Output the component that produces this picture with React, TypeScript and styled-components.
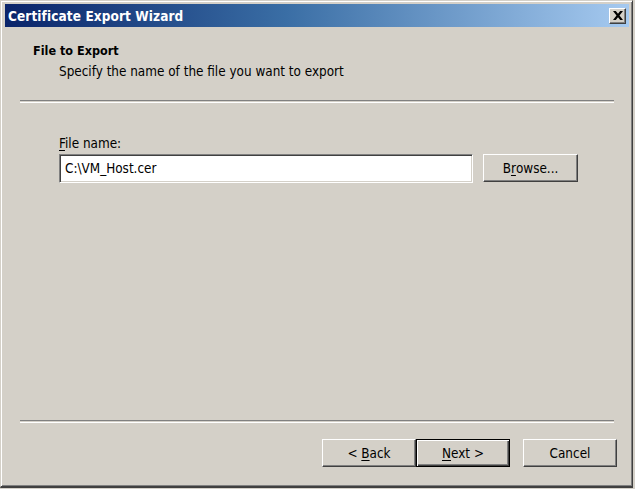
import React from "react";
import styled, { createGlobalStyle } from "styled-components";

const Global = createGlobalStyle`
  html, body { margin: 0; padding: 0; background: #d4d0c8; }
  body { font-family: "DejaVu Sans Condensed", "DejaVu Sans", Tahoma, sans-serif; }
`;

const Window = styled.div`
  box-sizing: border-box;
  width: 633px;
  height: 488px;
  background: #d4d0c8;
  border-top: 1px solid #d4d0c8;
  border-left: 1px solid #d4d0c8;
  border-right: 1px solid #404040;
  border-bottom: 2px solid #404040;
  box-shadow: inset 1px 1px 0 #ffffff, inset -1px -1px 0 #808080;
  padding: 3px 3px 3px 4px;
  display: flex;
  flex-direction: column;
`;

const TitleBar = styled.div`
  height: 23px;
  display: flex;
  align-items: center;
  justify-content: space-between;
  padding: 0 3px 0 3px;
  background: linear-gradient(90deg, #0a246a 0%, #3a6ea5 45%, #a6caf0 100%);
`;

const Title = styled.span`
  color: #ffffff;
  font-weight: bold;
  font-size: 13.5px;
  letter-spacing: 0.1px;
`;

const CloseButton = styled.div`
  box-sizing: border-box;
  width: 17px;
  height: 16px;
  background: #d4d0c8;
  border-top: 1px solid #ffffff;
  border-left: 1px solid #ffffff;
  border-right: 1px solid #404040;
  border-bottom: 1px solid #404040;
  box-shadow: inset -1px -1px 0 #808080;
  display: flex;
  align-items: center;
  justify-content: center;
`;

const Header = styled.div`
  padding: 16px 0 0 28px;
  height: 73px;
  box-sizing: border-box;
`;

const Heading = styled.div`
  font-weight: bold;
  font-size: 12.5px;
  color: #000;
  line-height: 16px;
`;

const Subtitle = styled.div`
  font-size: 13.4px;
  color: #000;
  margin-top: 4px;
  padding-left: 26px;
  line-height: 17px;
`;

const Separator = styled.div`
  margin: 0 15px 0 15px;
  height: 1px;
  border-top: 1px solid #808080;
  border-bottom: 1px solid #ffffff;
`;

const Body = styled.div`
  flex: 1;
  padding: 32px 0 0 54px;
`;

const Label = styled.div`
  font-size: 13.4px;
  line-height: 17px;
  color: #000;
  margin-bottom: 2px;
`;

const Row = styled.div`
  display: flex;
  align-items: flex-start;
  gap: 10px;
`;

const Input = styled.div`
  box-sizing: border-box;
  width: 414px;
  height: 29px;
  background: #fff;
  border-top: 1px solid #808080;
  border-left: 1px solid #808080;
  border-right: 1px solid #ffffff;
  border-bottom: 1px solid #ffffff;
  box-shadow: inset 1px 1px 0 #404040, inset -1px -1px 0 #d4d0c8;
  font-size: 13.4px;
  display: flex;
  align-items: center;
  padding-left: 5px;
  color: #000;
`;

const Button = styled.div<{ $default?: boolean; $w?: number }>`
  box-sizing: border-box;
  width: ${(p) => p.$w ?? 95}px;
  height: 28px;
  background: #d4d0c8;
  font-size: 13.4px;
  color: #000;
  display: flex;
  align-items: center;
  justify-content: center;
  white-space: pre;
  ${(p) =>
    p.$default
      ? `border: 1px solid #000;
         box-shadow: inset 1px 1px 0 #ffffff, inset -1px -1px 0 #404040, inset -2px -2px 0 #808080;`
      : `border-top: 1px solid #ffffff;
         border-left: 1px solid #ffffff;
         border-right: 1px solid #404040;
         border-bottom: 1px solid #404040;
         box-shadow: inset -1px -1px 0 #808080;`}
`;

const Footer = styled.div`
  height: 60px;
  box-sizing: border-box;
  display: flex;
  justify-content: flex-end;
  align-items: flex-start;
  padding: 16px 12px 0 0;
`;

const ButtonGroup = styled.div`
  display: flex;
  margin-right: 13px;
`;

const U = styled.span`
  text-decoration: underline;
  text-underline-offset: 2px;
`;

export default function App() {
  return (
    <>
      <Global />
      <Window>
        <TitleBar>
          <Title>Certificate Export Wizard</Title>
          <CloseButton>
            <svg width="10" height="9" viewBox="0 0 10 9">
              <path d="M0 0h2.8l2.2 2.8 2.2-2.8H10L6.5 4.5 10 9H7.2L5 6.2 2.8 9H0l3.5-4.5z" fill="#000" />
            </svg>
          </CloseButton>
        </TitleBar>
        <Header>
          <Heading>File to Export</Heading>
          <Subtitle>Specify the name of the file you want to export</Subtitle>
        </Header>
        <Separator />
        <Body>
          <Label>
            <U>F</U>ile name:
          </Label>
          <Row>
            <Input>C:\VM_Host.cer</Input>
            <Button $w={95}>
              B<U>r</U>owse...
            </Button>
          </Row>
        </Body>
        <Separator />
        <Footer>
          <ButtonGroup>
            <Button $w={94}>
              {"< "}<U>B</U>ack
            </Button>
            <Button $w={94} $default>
              <U>N</U>ext {">"}
            </Button>
          </ButtonGroup>
          <Button $w={94}>Cancel</Button>
        </Footer>
      </Window>
    </>
  );
}
